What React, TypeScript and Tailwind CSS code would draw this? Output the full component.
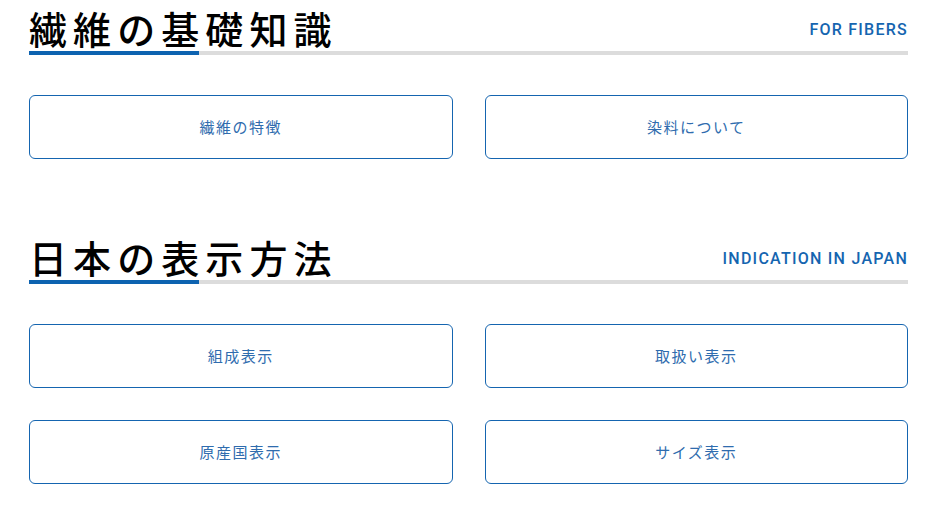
import React from "react";

const jp = { fontFamily: '"Noto Sans CJK JP", "Noto Sans", sans-serif' };
const en = { fontFamily: 'Roboto, "Noto Sans CJK JP", sans-serif' };

function Heading({ title, label }: { title: string; label: string }) {
  return (
    <div className="relative flex items-end justify-between border-b-4 border-[#dcdcdc] pt-[4px]">
      <h2
        className="text-[38px] leading-[47px] font-medium tracking-[0.16em] text-black"
        style={jp}
      >
        {title}
      </h2>
      <span
        className="mb-[13px] text-[16px] font-medium tracking-[0.078em] text-[#1565b0] leading-none"
        style={en}
      >
        {label}
      </span>
      <div className="absolute left-0 bottom-[-4px] h-[4px] w-[170px] bg-[#0d63b0]" />
    </div>
  );
}

function Btn({ text }: { text: string }) {
  return (
    <a
      href="#"
      className="flex h-[64px] items-center justify-center rounded-[6px] border border-[#1565b0] bg-white text-[15px] tracking-[0.1em] text-[#2f6cae]"
      style={jp}
    >
      {text}
    </a>
  );
}

export default function App() {
  return (
    <div className="h-[509px] w-[938px] overflow-hidden bg-white pl-[29px] pr-[30px]">
      <section>
        <Heading title="繊維の基礎知識" label="FOR FIBERS" />
        <div className="mt-[40px] grid grid-cols-2 gap-[32px]">
          <Btn text="繊維の特徴" />
          <Btn text="染料について" />
        </div>
      </section>
      <section className="mt-[70px]">
        <Heading title="日本の表示方法" label="INDICATION IN JAPAN" />
        <div className="mt-[40px] grid grid-cols-2 gap-x-[32px] gap-y-[32px]">
          <Btn text="組成表示" />
          <Btn text="取扱い表示" />
          <Btn text="原産国表示" />
          <Btn text="サイズ表示" />
        </div>
      </section>
    </div>
  );
}
